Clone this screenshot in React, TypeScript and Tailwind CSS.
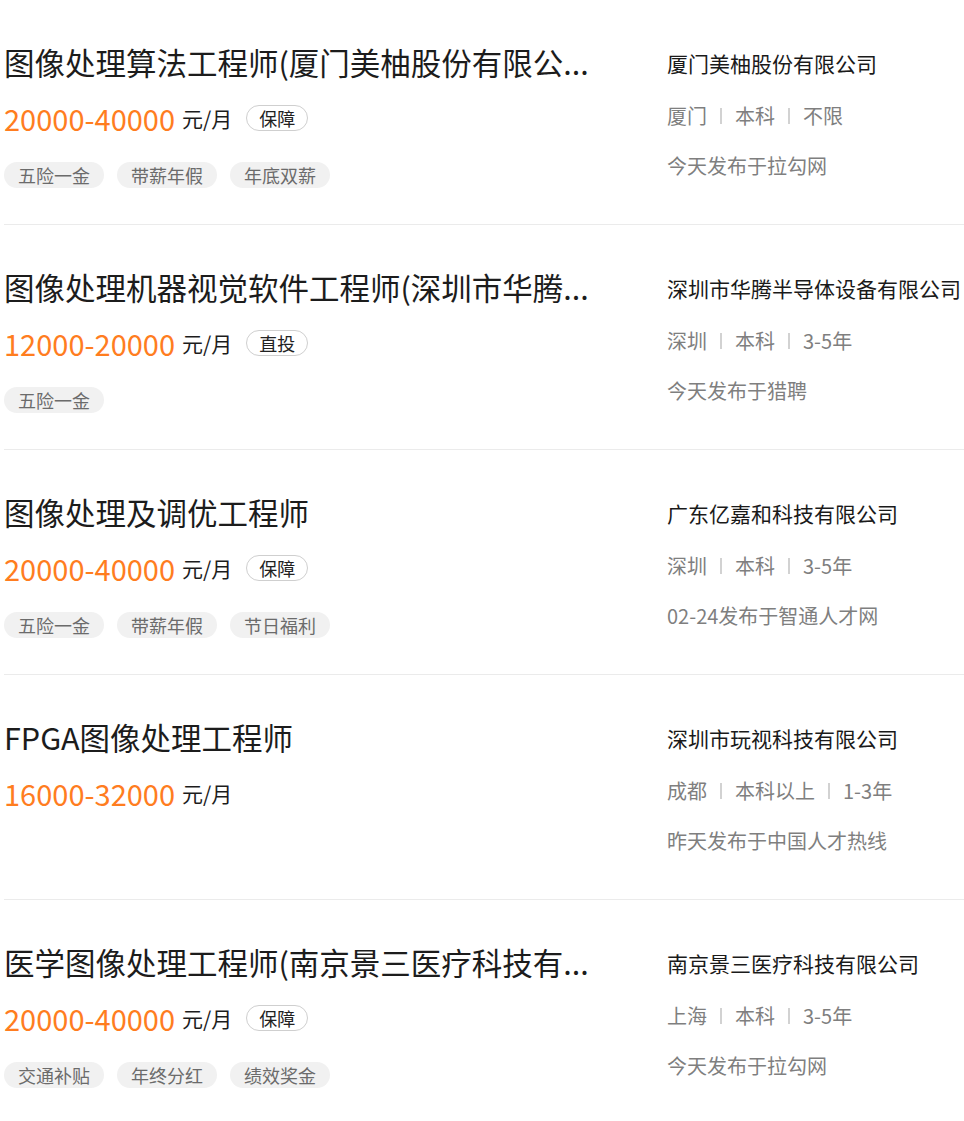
import React from "react";

type Job = {
  title: string;
  salary: string;
  badge?: string;
  tags: string[];
  company: string;
  meta: string[];
  source: string;
};

const jobs: Job[] = [
  {
    title: "图像处理算法工程师(厦门美柚股份有限公...",
    salary: "20000-40000",
    badge: "保障",
    tags: ["五险一金", "带薪年假", "年底双薪"],
    company: "厦门美柚股份有限公司",
    meta: ["厦门", "本科", "不限"],
    source: "今天发布于拉勾网",
  },
  {
    title: "图像处理机器视觉软件工程师(深圳市华腾...",
    salary: "12000-20000",
    badge: "直投",
    tags: ["五险一金"],
    company: "深圳市华腾半导体设备有限公司",
    meta: ["深圳", "本科", "3-5年"],
    source: "今天发布于猎聘",
  },
  {
    title: "图像处理及调优工程师",
    salary: "20000-40000",
    badge: "保障",
    tags: ["五险一金", "带薪年假", "节日福利"],
    company: "广东亿嘉和科技有限公司",
    meta: ["深圳", "本科", "3-5年"],
    source: "02-24发布于智通人才网",
  },
  {
    title: "FPGA图像处理工程师",
    salary: "16000-32000",
    tags: [],
    company: "深圳市玩视科技有限公司",
    meta: ["成都", "本科以上", "1-3年"],
    source: "昨天发布于中国人才热线",
  },
  {
    title: "医学图像处理工程师(南京景三医疗科技有...",
    salary: "20000-40000",
    badge: "保障",
    tags: ["交通补贴", "年终分红", "绩效奖金"],
    company: "南京景三医疗科技有限公司",
    meta: ["上海", "本科", "3-5年"],
    source: "今天发布于拉勾网",
  },
];

const font = {
  fontFamily: '"Noto Sans CJK SC", "Noto Sans", sans-serif',
};

function JobRow({ job }: { job: Job }) {
  return (
    <div className="flex h-[225px] border-b border-[#ebebeb]">
      <div className="flex w-[663px] flex-col pt-[42px]">
        <div className="whitespace-nowrap text-[30.5px] leading-[40px] text-[#1c1c1c]">
          {job.title}
        </div>
        <div className="mt-[20px] flex h-[32px] items-center">
          <span className="text-[29px] leading-[32px] text-[#ff7d1f]">
            {job.salary}
          </span>
          <span className="ml-[7px] text-[21px] leading-[32px] text-[#1c1c1c]">
            元/月
          </span>
          {job.badge && (
            <span className="ml-[14px] rounded-full border border-[#cfcfcf] px-[12px] text-[18px] leading-[24px] text-[#222]">
              {job.badge}
            </span>
          )}
        </div>
        {job.tags.length > 0 && (
          <div className="mt-[28px] flex gap-[13px]">
            {job.tags.map((t) => (
              <span
                key={t}
                className="rounded-full bg-[#f1f1f1] px-[14px] text-[18px] leading-[26px] text-[#6b6b6b]"
              >
                {t}
              </span>
            ))}
          </div>
        )}
      </div>
      <div className="flex flex-1 flex-col pt-[48px]">
        <div className="whitespace-nowrap text-[21px] leading-[30px] text-[#1a1a1a]">
          {job.company}
        </div>
        <div className="mt-[23px] flex items-center text-[20px] leading-[30px] text-[#7f7f7f]">
          {job.meta.map((m, i) => (
            <React.Fragment key={i}>
              {i > 0 && (
                <span className="mx-[13px] h-[16px] w-[2px] bg-[#d2d2d2]" />
              )}
              <span className="whitespace-nowrap">{m}</span>
            </React.Fragment>
          ))}
        </div>
        <div className="mt-[20px] whitespace-nowrap text-[20px] leading-[30px] text-[#7f7f7f]">
          {job.source}
        </div>
      </div>
    </div>
  );
}

export default function App() {
  return (
    <div className="min-h-[1121px] bg-white pl-[4px]" style={font}>
      {jobs.map((j, i) => (
        <JobRow key={i} job={j} />
      ))}
    </div>
  );
}
